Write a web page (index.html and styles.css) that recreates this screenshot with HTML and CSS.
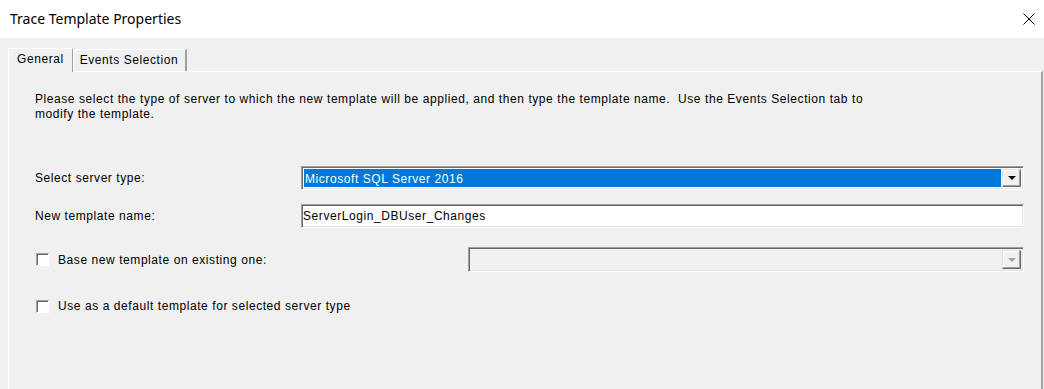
FILE: index.html
```html
<!DOCTYPE html>
<html lang="en">
<head>
    <meta charset="UTF-8">
    <title>Trace Template Properties</title>
    <link rel="stylesheet" href="styles.css">
</head>
<body>
    <div class="window">
        <div class="titlebar">
            <span class="title">Trace Template Properties</span>
            <svg class="close" width="12" height="12" viewBox="0 0 12 12">
                <path d="M0.5 0.5 L11.5 11.5 M11.5 0.5 L0.5 11.5" stroke="#000" stroke-width="1" fill="none"/>
            </svg>
        </div>

        <div class="dialog">
            <div class="tabs">
                <div class="tab active">General</div>
                <div class="tab">Events Selection</div>
            </div>

            <div class="panel">
                <p class="intro">Please select the type of server to which the new template will be applied, and then type the template name.&nbsp; Use the Events Selection tab to<br>modify the template.</p>

                <div class="row row-server">
                    <label class="label">Select server type:</label>
                    <div class="combo">
                        <div class="combo-value selected">Microsoft SQL Server 2016</div>
                        <div class="combo-btn"><span class="arrow"></span></div>
                    </div>
                </div>

                <div class="row row-name">
                    <label class="label">New template name:</label>
                    <div class="textbox">ServerLogin_DBUser_Changes</div>
                </div>

                <div class="row row-base">
                    <label class="check-label"><span class="checkbox"></span>Base new template on existing one:</label>
                    <div class="combo disabled">
                        <div class="combo-value"></div>
                        <div class="combo-btn"><span class="arrow"></span></div>
                    </div>
                </div>

                <div class="row row-default">
                    <label class="check-label"><span class="checkbox"></span>Use as a default template for selected server type</label>
                </div>
            </div>
        </div>
    </div>
</body>
</html>
```

FILE: styles.css
```css
body {
    margin: 0;
    width: 1044px;
    height: 389px;
    overflow: hidden;
    font-family: "Liberation Sans", Arial, sans-serif;
    font-size: 12px;
    letter-spacing: 0.57px;
    color: #000;
    background-color: #f0f0f0;
}
.window {
    display: flex;
    flex-direction: column;
    height: 389px;
}
.titlebar {
    height: 38px;
    display: flex;
    align-items: center;
    justify-content: space-between;
    padding: 0 9px 0 10px;
    background-color: #fff;
    letter-spacing: 0;
}
.title {
    font-family: "Noto Sans", sans-serif;
    font-size: 14px;
    padding-bottom: 1px;
}
.dialog {
    flex: 1;
    display: flex;
    flex-direction: column;
    padding: 9px 1px 0 8px;
}
.tabs {
    display: flex;
    align-items: flex-end;
    height: 24px;
}
.tab {
    height: 22px;
    padding: 0 7px 0 6px;
    line-height: 21px;
    border-top: 1px solid #fff;
    border-left: 1px solid #fff;
    border-right: 2px solid #a0a0a0;
    box-sizing: border-box;
}
.tab.active {
    height: 24px;
    line-height: 20px;
    padding: 0 8px 0 8px;
    border-right: 1px solid #a0a0a0;
    margin-bottom: -1px;
    background-color: #f0f0f0;
    position: relative;
    z-index: 1;
}
.panel {
    flex: 1;
    border-top: 1px solid #fff;
    border-left: 1px solid #fff;
    border-right: 2px solid #a0a0a0;
    padding: 0 17px 0 26px;
}
.intro {
    margin: 20px 0 0;
    line-height: 15px;
}
.row {
    display: flex;
    align-items: center;
}
.row-server {
    margin-top: 44px;
}
.row-name {
    margin-top: 14px;
}
.row-base {
    margin-top: 19px;
}
.row-default {
    margin-top: 27px;
}
.label {
    width: 266px;
    flex-shrink: 0;
}
.check-label {
    display: flex;
    align-items: center;
    width: 433px;
    flex-shrink: 0;
}
.checkbox {
    width: 11px;
    height: 11px;
    margin: 0 9px 0 1px;
    background-color: #fff;
    border: 1px solid;
    border-color: #a0a0a0 #fff #fff #a0a0a0;
    box-shadow: inset 1px 1px #696969;
}
.combo, .textbox {
    flex: 1;
    height: 24px;
    box-sizing: border-box;
    border: 1px solid;
    border-color: #a0a0a0 #fff #fff #a0a0a0;
    box-shadow: inset 1px 1px #696969, inset -1px -1px #e3e3e3;
    background-color: #fff;
}
.combo {
    display: flex;
    padding: 2px;
}
.combo.disabled {
    height: 25px;
    background-color: #f0f0f0;
}
.combo-value {
    flex: 1;
    padding-left: 1px;
    line-height: 20px;
}
.combo-value.selected {
    background-color: #0078d7;
    color: #fff;
    margin-right: 1px;
}
.combo-btn {
    width: 17px;
    display: flex;
    align-items: center;
    justify-content: center;
    background-color: #f0f0f0;
    border-top: 1px solid #e3e3e3;
    border-left: 1px solid #e3e3e3;
    border-right: 1px solid #696969;
    border-bottom: 1px solid #696969;
    box-shadow: inset -1px -1px #a0a0a0, inset 1px 1px #fff;
}
.arrow {
    width: 0;
    height: 0;
    border-left: 4px solid transparent;
    border-right: 4px solid transparent;
    border-top: 4px solid #000;
}
.combo.disabled .arrow {
    border-top-color: #a0a0a0;
}
.textbox {
    padding-left: 1px;
    line-height: 22px;
}
```
